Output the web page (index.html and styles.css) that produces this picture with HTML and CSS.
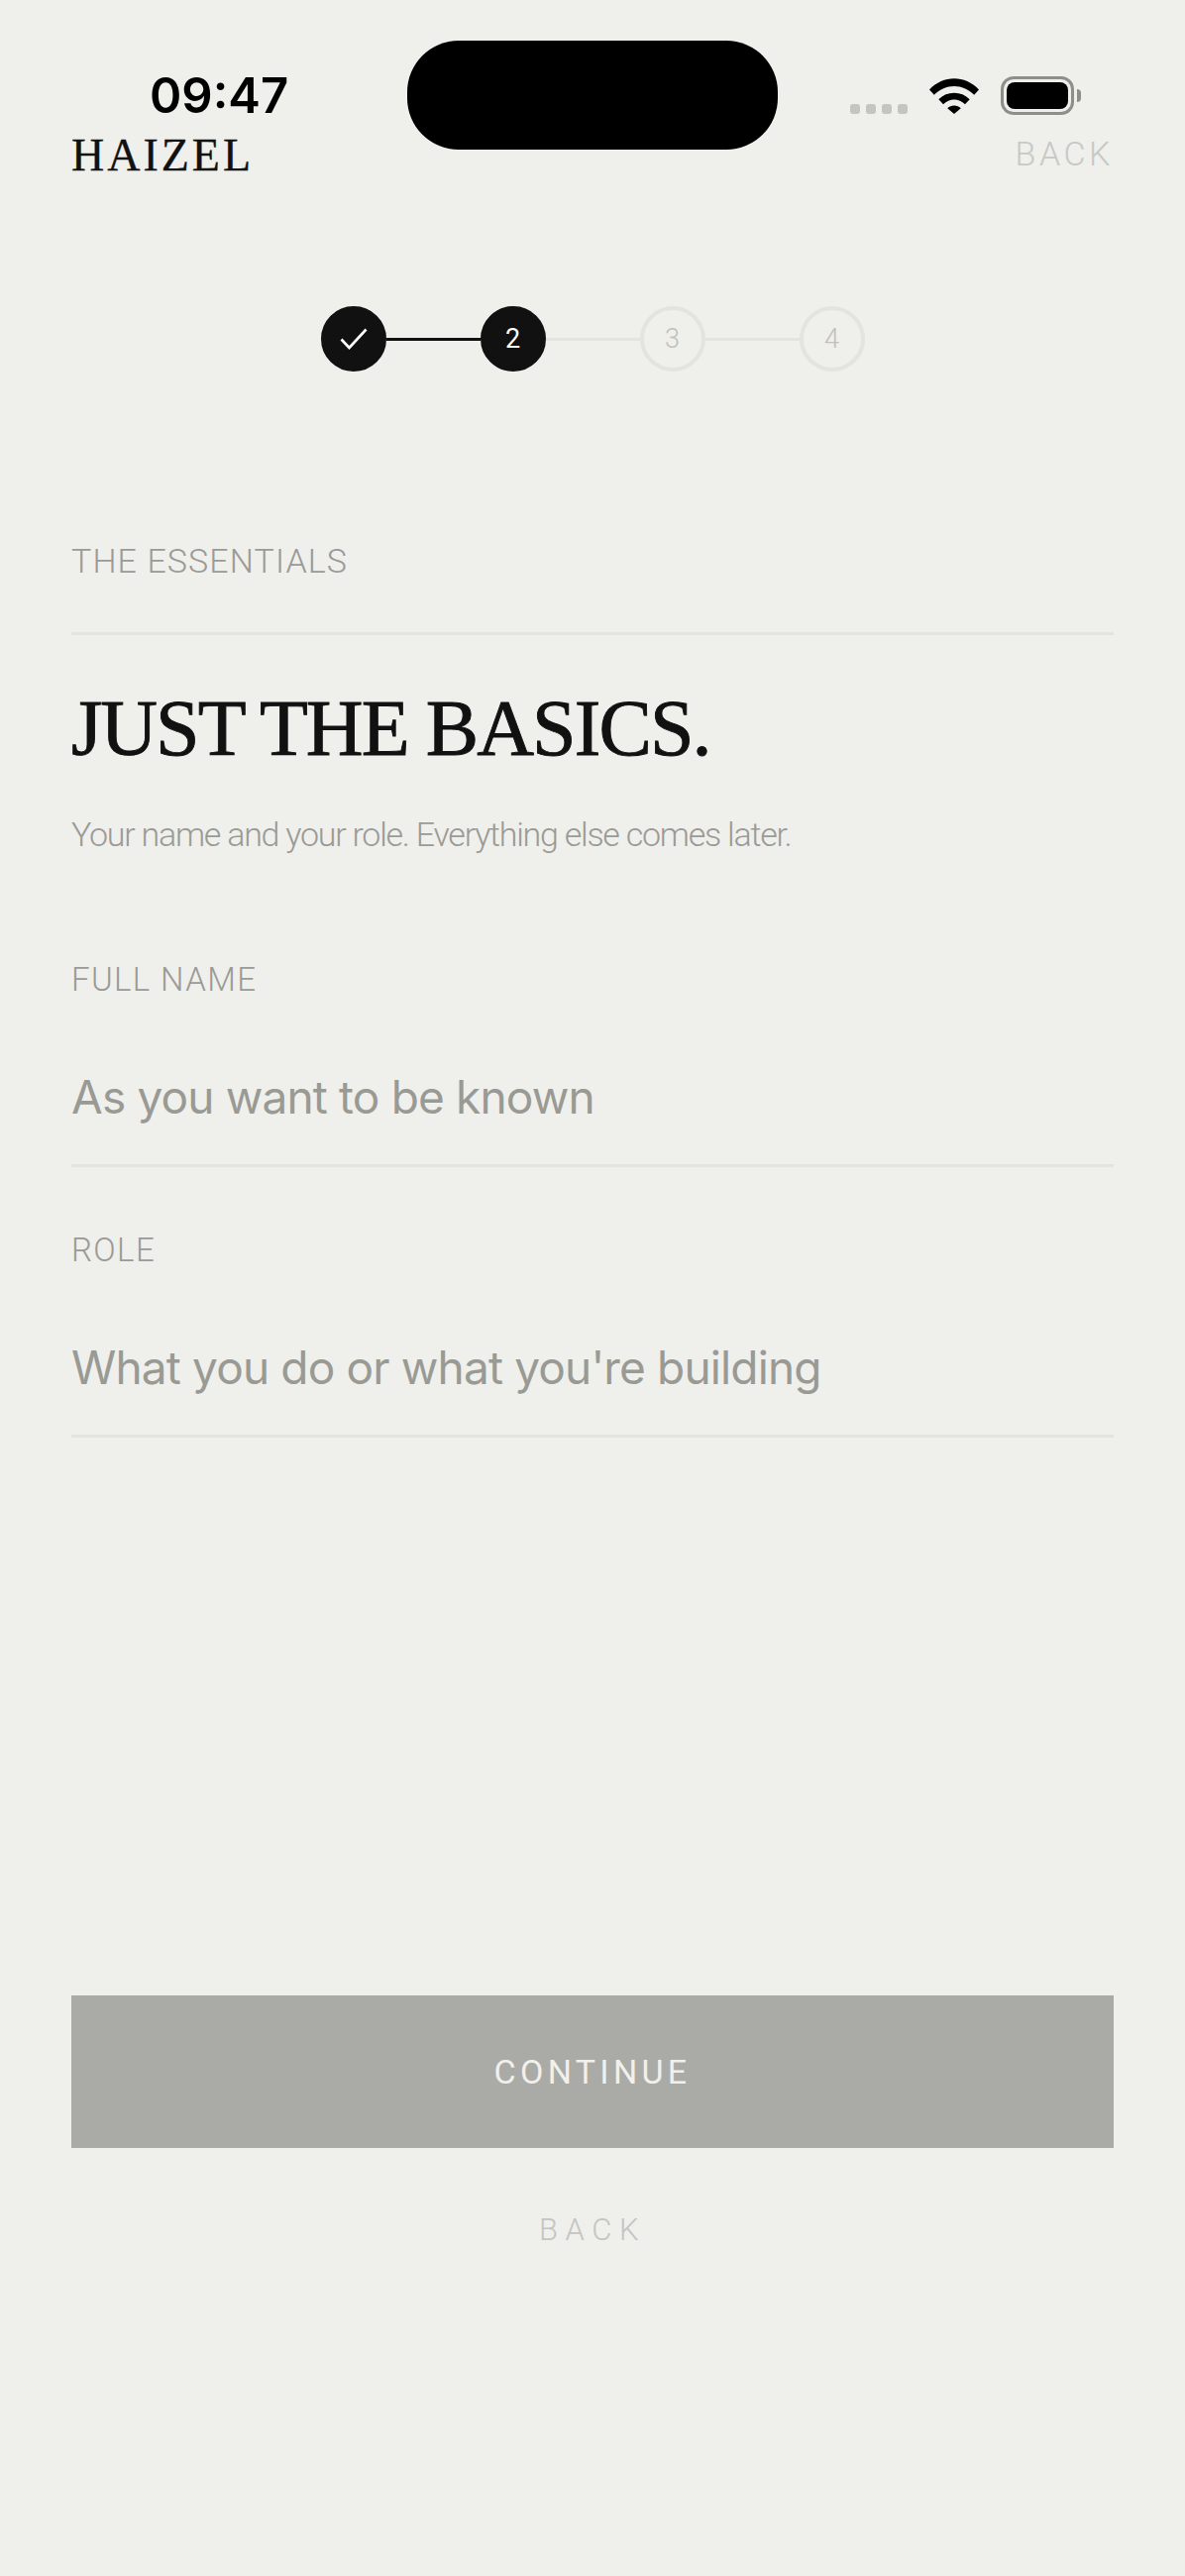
FILE: index.html
```html
<!DOCTYPE html>
<html>
<head>
    <title>HAIZEL</title>
    <link rel="stylesheet" href="styles.css">
</head>
<body>
    <div class="island"></div>

    <div class="status-bar">
        <span class="time">09:47</span>
        <div class="status-icons">
            <div class="signal"><i></i><i></i><i></i><i></i></div>
            <svg class="wifi" width="50" height="37" viewBox="0 0 50 37">
                <path d="M0 12.5C14 -2.5 36 -2.5 50 12.5L45.2 17.8C33.5 6 16.5 6 4.8 17.8Z"/>
                <path d="M9.3 22.2C17.8 13.6 32.2 13.6 40.7 22.2L36 27.2C29.5 20.8 20.5 20.8 14 27.2Z"/>
                <path d="M18.2 31.2C22 27.5 28 27.5 31.8 31.2L25 37Z"/>
            </svg>
            <div class="battery"><div class="battery-level"></div></div>
            <div class="battery-cap"></div>
        </div>
    </div>

    <div class="top-nav">
        <span class="brand">HAIZEL</span>
        <span class="top-back">BACK</span>
    </div>

    <div class="stepper">
        <div class="step step-done">
            <svg width="28" height="22" viewBox="0 0 28 22">
                <path d="M1.5 11.5L9.5 20L26.5 1.5" fill="none" stroke="#fff" stroke-width="2.6"/>
            </svg>
        </div>
        <div class="step-line step-line-done"></div>
        <div class="step step-current">2</div>
        <div class="step-line"></div>
        <div class="step">3</div>
        <div class="step-line"></div>
        <div class="step">4</div>
    </div>

    <div class="section-title">THE ESSENTIALS</div>

    <h1 class="heading">JUST THE BASICS.</h1>
    <p class="subtitle">Your name and your role. Everything else comes later.</p>

    <div class="field">
        <label class="field-label">FULL NAME</label>
        <div class="field-input">As you want to be known</div>
    </div>

    <div class="field">
        <label class="field-label">ROLE</label>
        <div class="field-input">What you do or what you're building</div>
    </div>

    <button class="continue-btn">CONTINUE</button>
    <div class="bottom-back">BACK</div>
</body>
</html>
```

FILE: styles.css
```css
body {
    margin: 0;
    background-color: #efefeb;
    font-family: Roboto, "Liberation Sans", sans-serif;
    color: #9a9a96;
    position: relative;
}

.island {
    position: absolute;
    top: 41px;
    left: 411px;
    width: 374px;
    height: 110px;
    border-radius: 52px;
    background-color: #000;
}

.status-bar {
    height: 135px;
    padding: 0 105px 0 151px;
    display: flex;
    justify-content: space-between;
    align-items: flex-start;
}

.time {
    margin-top: 67px;
    font-family: Inter, sans-serif;
    font-size: 49px;
    line-height: 60px;
    font-weight: 600;
    color: #000;
}

.status-icons {
    margin-top: 77px;
    display: flex;
    align-items: flex-start;
}

.signal {
    margin-top: 28px;
    display: flex;
    gap: 5.5px;
}

.signal i {
    display: block;
    width: 10.5px;
    height: 10px;
    border-radius: 3px;
    background-color: #c4c4c0;
}

.wifi {
    margin: 1px 22px 0 22px;
}

.battery {
    width: 74px;
    height: 39px;
    box-sizing: border-box;
    border: 3px solid #8e8e8c;
    border-radius: 13px;
    padding: 3px;
}

.battery-level {
    height: 100%;
    border-radius: 8px;
    background-color: #000;
}

.battery-cap {
    width: 4px;
    height: 13px;
    margin: 13px 0 0 3px;
    border-radius: 0 5px 5px 0;
    background-color: #8e8e8c;
}

.top-nav {
    padding: 0 72px;
    display: flex;
    justify-content: space-between;
    align-items: center;
    height: 40px;
}

.brand {
    padding-top: 2px;
    font-family: "Liberation Serif", serif;
    font-size: 46px;
    letter-spacing: 3px;
    -webkit-text-stroke: 0.3px #111;
    color: #111;
}

.top-back {
    font-size: 34px;
    font-weight: 300;
    letter-spacing: 3.5px;
    color: #c8c8c4;
}

.stepper {
    margin-top: 134px;
    display: flex;
    justify-content: center;
    align-items: center;
}

.step {
    width: 66px;
    height: 66px;
    box-sizing: border-box;
    border: 4px solid #e3e3df;
    border-radius: 50%;
    display: flex;
    justify-content: center;
    align-items: center;
    font-size: 27px;
    font-weight: 300;
    color: #c0c0bc;
}

.step-done,
.step-current {
    border-color: #111;
    background-color: #111;
    color: #fff;
    font-weight: 400;
}

.step-line {
    width: 95px;
    height: 3px;
    background-color: #e3e3df;
}

.step-line-done {
    background-color: #111;
}

.section-title {
    margin: 171px 72px 0;
    padding-bottom: 52px;
    border-bottom: 3px solid #e3e3df;
    font-size: 34px;
    line-height: 40px;
    font-weight: 300;
    letter-spacing: 1.1px;
}

.heading {
    margin: 49px 72px 0;
    font-family: "Liberation Serif", serif;
    font-size: 80px;
    line-height: 90px;
    font-weight: 400;
    letter-spacing: -1.9px;
    -webkit-text-stroke: 0.9px #111;
    color: #111;
}

.subtitle {
    margin: 42px 72px 43px;
    font-size: 34px;
    line-height: 40px;
    font-weight: 300;
    letter-spacing: -1.25px;
}

.field {
    margin: 0 72px;
    padding-top: 64px;
    border-bottom: 3px solid #e3e3df;
}

.field-label {
    display: block;
    font-size: 33px;
    line-height: 40px;
    font-weight: 300;
    letter-spacing: 1.4px;
}

.field-input {
    padding: 70px 0 40px;
    font-family: Inter, sans-serif;
    font-size: 46px;
    line-height: 56px;
    font-weight: 400;
    letter-spacing: -0.85px;
    color: #9a9a94;
}

.continue-btn {
    display: block;
    width: 1052px;
    height: 154px;
    margin: 563px 72px 0;
    border: none;
    background-color: #aaaba6;
    font-family: Roboto, "Liberation Sans", sans-serif;
    font-size: 34px;
    font-weight: 400;
    letter-spacing: 4.3px;
    color: #f0f0ec;
}

.bottom-back {
    margin-top: 63px;
    text-align: center;
    font-size: 31px;
    line-height: 40px;
    font-weight: 300;
    letter-spacing: 7.5px;
    color: #c4c4c0;
}
```
